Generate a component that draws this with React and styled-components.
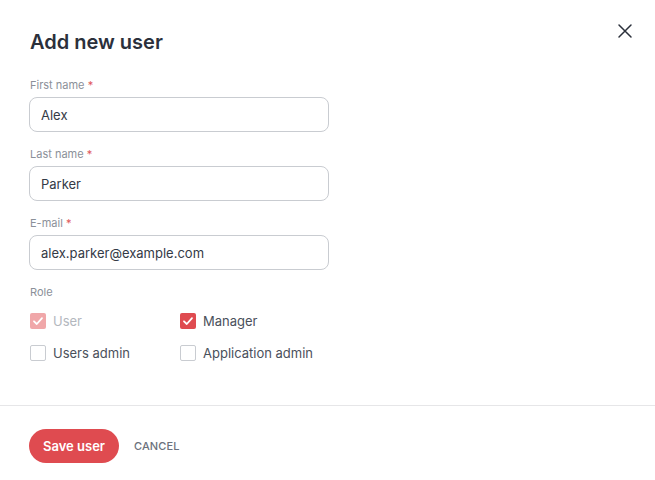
import React from 'react';
import styled, { createGlobalStyle } from 'styled-components';

const GlobalStyle = createGlobalStyle`
  html, body {
    margin: 0;
    padding: 0;
    background: #ffffff;
    font-family: Inter, "Noto Sans", sans-serif;
  }
`;

const roles = [
  { name: 'User', checked: true, disabled: true },
  { name: 'Manager', checked: true },
  { name: 'Users admin' },
  { name: 'Application admin' },
];

function CheckIcon() {
  return (
    <svg width="12" height="12" viewBox="0 0 12 12" fill="none">
      <path d="M2 6.3 L4.8 9 L10 3.2" stroke="#fff" strokeWidth="1.8" strokeLinecap="round" strokeLinejoin="round" />
    </svg>
  );
}

function Field({ label, value }) {
  return (
    <FieldWrap>
      <Label>
        {label} <Required>*</Required>
      </Label>
      <Input defaultValue={value} />
    </FieldWrap>
  );
}

export default function App() {
  return (
    <>
      <GlobalStyle />
      <Modal>
        <CloseButton aria-label="Close">
          <svg width="16" height="16" viewBox="0 0 16 16" fill="none">
            <path d="M2 2 L14 14 M14 2 L2 14" stroke="#2b303b" strokeWidth="1.5" strokeLinecap="round" />
          </svg>
        </CloseButton>
        <Body>
          <Title>Add new user</Title>
          <Field label="First name" value="Alex" />
          <Field label="Last name" value="Parker" />
          <Field label="E-mail" value="alex.parker@example.com" />
          <Label>Role</Label>
          <RoleGrid>
            {roles.map((r) => (
              <RoleOption key={r.name} $disabled={r.disabled}>
                <Box $checked={r.checked} $disabled={r.disabled}>
                  {r.checked && <CheckIcon />}
                </Box>
                {r.name}
              </RoleOption>
            ))}
          </RoleGrid>
        </Body>
        <Footer>
          <SaveButton>Save user</SaveButton>
          <CancelButton>CANCEL</CancelButton>
        </Footer>
      </Modal>
    </>
  );
}

const Modal = styled.div`
  position: relative;
  width: 655px;
  height: 480px;
  background: #fff;
`;

const CloseButton = styled.button`
  position: absolute;
  top: 23px;
  right: 22px;
  width: 16px;
  height: 16px;
  padding: 0;
  border: none;
  background: none;
  display: flex;
  cursor: pointer;
`;

const Body = styled.div`
  padding: 30px 30px 0 29px;
  height: 406px;
  box-sizing: border-box;
  border-bottom: 1px solid #e6e6e8;
`;

const Title = styled.h1`
  margin: 0 0 24px 1px;
  font-size: 20px;
  line-height: 24px;
  font-weight: 600;
  color: #2b303b;
`;

const FieldWrap = styled.div`
  display: flex;
  flex-direction: column;
  gap: 5px;
  margin-bottom: 15px;
`;

const Label = styled.div`
  font-size: 11px;
  line-height: 14px;
  color: #8b9099;
  margin-left: 1px;
`;

const Required = styled.span`
  color: #e0575b;
`;

const Input = styled.input`
  width: 300px;
  height: 35px;
  box-sizing: border-box;
  border: 1px solid #c9ccd1;
  border-radius: 8px;
  padding: 0 11px;
  font-family: Inter, "Noto Sans", sans-serif;
  font-size: 13px;
  color: #343a46;
  outline: none;
`;

const RoleGrid = styled.div`
  display: grid;
  grid-template-columns: 150px 150px;
  row-gap: 12px;
  margin-top: 12px;
`;

const RoleOption = styled.label`
  display: flex;
  align-items: center;
  gap: 7px;
  height: 20px;
  margin-left: 1px;
  font-size: 13px;
  color: ${(p) => (p.$disabled ? '#b3b7be' : '#4a505b')};
`;

const Box = styled.span`
  width: 16px;
  height: 16px;
  box-sizing: border-box;
  border-radius: 2px;
  display: flex;
  align-items: center;
  justify-content: center;
  border: 1px solid ${(p) => (p.$checked ? 'transparent' : '#c9ccd1')};
  background: ${(p) => (p.$disabled ? '#f0a7a9' : p.$checked ? '#df4b50' : '#fff')};
`;

const Footer = styled.div`
  display: flex;
  align-items: center;
  gap: 15px;
  padding: 23px 29px;
`;

const SaveButton = styled.button`
  height: 34px;
  padding: 0 14px;
  border: none;
  border-radius: 17px;
  background: #df4b50;
  color: #fff;
  font-family: Inter, "Noto Sans", sans-serif;
  font-size: 13px;
  font-weight: 600;
  cursor: pointer;
`;

const CancelButton = styled.button`
  padding: 0;
  border: none;
  background: none;
  color: #6b717c;
  font-family: Inter, "Noto Sans", sans-serif;
  font-size: 11px;
  font-weight: 500;
  letter-spacing: 0.1px;
  cursor: pointer;
`;
